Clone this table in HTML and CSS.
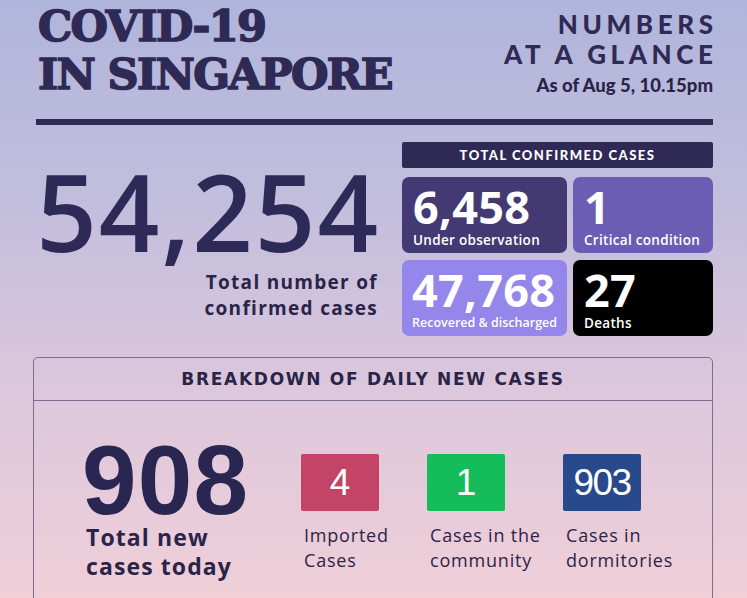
FILE: index.html
```html
<!DOCTYPE html>
<html lang="en">
<head>
<meta charset="utf-8">
<title>COVID-19 in Singapore</title>
<link rel="stylesheet" href="styles.css">
</head>
<body>
<div class="page">
  <header class="top">
    <h1 class="title">COVID-19<br>IN SINGAPORE</h1>
    <div class="glance">
      <div class="glance-title">NUMBERS<br>AT A GLANCE</div>
      <div class="asof">As of Aug 5, 10.15pm</div>
    </div>
  </header>
  <div class="rule"></div>
  <section class="totals">
    <div class="total-left">
      <div class="big">54,254</div>
      <div class="big-label">Total number of<br>confirmed cases</div>
    </div>
    <div class="total-right">
      <div class="bar">TOTAL CONFIRMED CASES</div>
      <div class="cards">
        <div class="card card-obs"><div class="card-num">6,458</div><div class="card-label">Under observation</div></div>
        <div class="card card-crit"><div class="card-num">1</div><div class="card-label">Critical condition</div></div>
        <div class="card card-rec"><div class="card-num">47,768</div><div class="card-label card-label-sm">Recovered &amp; discharged</div></div>
        <div class="card card-dead"><div class="card-num">27</div><div class="card-label">Deaths</div></div>
      </div>
    </div>
  </section>
  <section class="breakdown">
    <div class="bd-head">BREAKDOWN OF DAILY NEW CASES</div>
    <div class="bd-body">
      <div class="today">
        <div class="today-num">908</div>
        <div class="today-label">Total new<br>cases today</div>
      </div>
      <div class="kinds">
        <div class="kind">
          <div class="sq sq-imp">4</div>
          <div class="kind-label">Imported<br>Cases</div>
        </div>
        <div class="kind">
          <div class="sq sq-com">1</div>
          <div class="kind-label">Cases in the<br>community</div>
        </div>
        <div class="kind">
          <div class="sq sq-dorm">903</div>
          <div class="kind-label">Cases in<br>dormitories</div>
        </div>
      </div>
    </div>
  </section>
</div>
</body>
</html>
```
FILE: styles.css
```css
html, body {
  margin: 0;
  padding: 0;
}
body {
  width: 747px;
  height: 598px;
  overflow: hidden;
  background: linear-gradient(180deg, #b0b5db 0%, #c3bedd 35%, #dcc7dc 65%, #f0cfd8 100%);
  color: #2e2a55;
  font-family: "Open Sans", "Liberation Sans", sans-serif;
}
.page {
  padding: 0 34px 0 33px;
}
.top {
  display: flex;
  justify-content: space-between;
  align-items: flex-start;
}
.title {
  margin: 2px 0 0 5px;
  font-family: "DejaVu Serif", serif;
  font-weight: 700;
  font-size: 43px;
  line-height: 48px;
  letter-spacing: -1.6px;
  -webkit-text-stroke: 1.6px #2f2a55;
  color: #2f2a55;
}
.glance {
  text-align: right;
  padding-top: 9px;
}
.glance-title {
  font-family: Lato, "Noto Sans", sans-serif;
  font-weight: 900;
  font-size: 26px;
  line-height: 30px;
  letter-spacing: 4.6px;
  margin-right: -4.6px;
  color: #2f2a55;
}
.asof {
  font-family: Lato, "Noto Sans", sans-serif;
  font-weight: 900;
  font-size: 18.5px;
  line-height: 22px;
  margin-top: 5px;
  color: #2a2448;
}
.rule {
  height: 6px;
  background: #2f2a55;
  margin: 21px 0 0 3px;
}
.totals {
  display: flex;
  margin-top: 17px;
}
.total-left {
  flex: 1;
  display: flex;
  flex-direction: column;
  align-items: flex-end;
  padding-right: 24px;
}
.big {
  font-family: "Open Sans", sans-serif;
  font-weight: 600;
  font-size: 106px;
  line-height: 92px;
  letter-spacing: 2px;
  margin-top: 23px;
  margin-right: -2px;
  color: #2e2a58;
}
.big-label {
  font-family: "Open Sans", sans-serif;
  font-weight: 700;
  font-size: 19px;
  line-height: 26px;
  letter-spacing: 1.3px;
  text-align: right;
  margin-top: 12px;
  color: #2a2448;
}
.total-right {
  width: 311px;
}
.bar {
  height: 26px;
  background: #2f2a55;
  color: #fff;
  font-family: Lato, "Noto Sans", sans-serif;
  font-weight: 900;
  font-size: 13px;
  letter-spacing: 1.5px;
  display: flex;
  align-items: center;
  justify-content: center;
  border-radius: 2px;
}
.cards {
  margin-top: 9px;
  display: grid;
  grid-template-columns: 165px 140px;
  grid-template-rows: 76px 76px;
  column-gap: 6px;
  row-gap: 7px;
}
.card {
  border-radius: 7px;
  color: #fff;
  padding: 10px 0 0 11px;
  box-sizing: border-box;
}
.card-obs { background: #433a73; }
.card-crit { background: #6b5db4; }
.card-rec { background: #9486ea; padding-left: 10px; }
.card-dead { background: #000; }
.card-num {
  font-family: "Open Sans", sans-serif;
  font-weight: 700;
  font-size: 45px;
  line-height: 40px;
  letter-spacing: 0.3px;
}
.card-label {
  font-family: "Open Sans", sans-serif;
  font-weight: 600;
  font-size: 13.5px;
  line-height: 18px;
  letter-spacing: 0.3px;
  margin-top: 4px;
}
.card-label-sm {
  font-size: 12.5px;
  letter-spacing: 0;
}
.breakdown {
  margin-top: 21px;
  border: 1px solid #7a6f92;
  border-radius: 5px;
  height: 300px;
}
.bd-head {
  height: 42px;
  border-bottom: 1px solid #7a6f92;
  display: flex;
  align-items: center;
  justify-content: center;
  font-family: "DejaVu Sans", sans-serif;
  font-weight: 700;
  font-size: 17px;
  letter-spacing: 1.7px;
  color: #2a2448;
}
.bd-body {
  display: flex;
  padding: 36px 0 0 48px;
}
.today {
  width: 219px;
}
.today-num {
  font-family: "Liberation Sans", sans-serif;
  font-weight: 700;
  font-size: 98px;
  line-height: 76px;
  letter-spacing: 1.3px;
  margin-top: 5px;
  color: #2a2652;
}
.today-label {
  font-family: "Open Sans", sans-serif;
  font-weight: 700;
  font-size: 23px;
  line-height: 29px;
  letter-spacing: 1.1px;
  margin: 5px 0 0 4px;
  color: #2a2448;
}
.kinds {
  display: grid;
  grid-template-columns: 126px 136px auto;
  padding-top: 17px;
}
.sq {
  width: 78px;
  height: 57px;
  border-radius: 2px;
  color: #fff;
  font-family: "Liberation Sans", sans-serif;
  font-size: 37px;
  display: flex;
  align-items: center;
  justify-content: center;
}
.sq-imp { background: #c34467; }
.sq-com { background: #14bd5a; }
.sq-dorm { background: #284a8c; letter-spacing: -1.5px; }
.kind-label {
  font-family: "Open Sans", sans-serif;
  font-weight: 400;
  font-size: 18px;
  line-height: 25px;
  letter-spacing: 0.8px;
  margin: 12px 0 0 3px;
  color: #2a2448;
}
```
